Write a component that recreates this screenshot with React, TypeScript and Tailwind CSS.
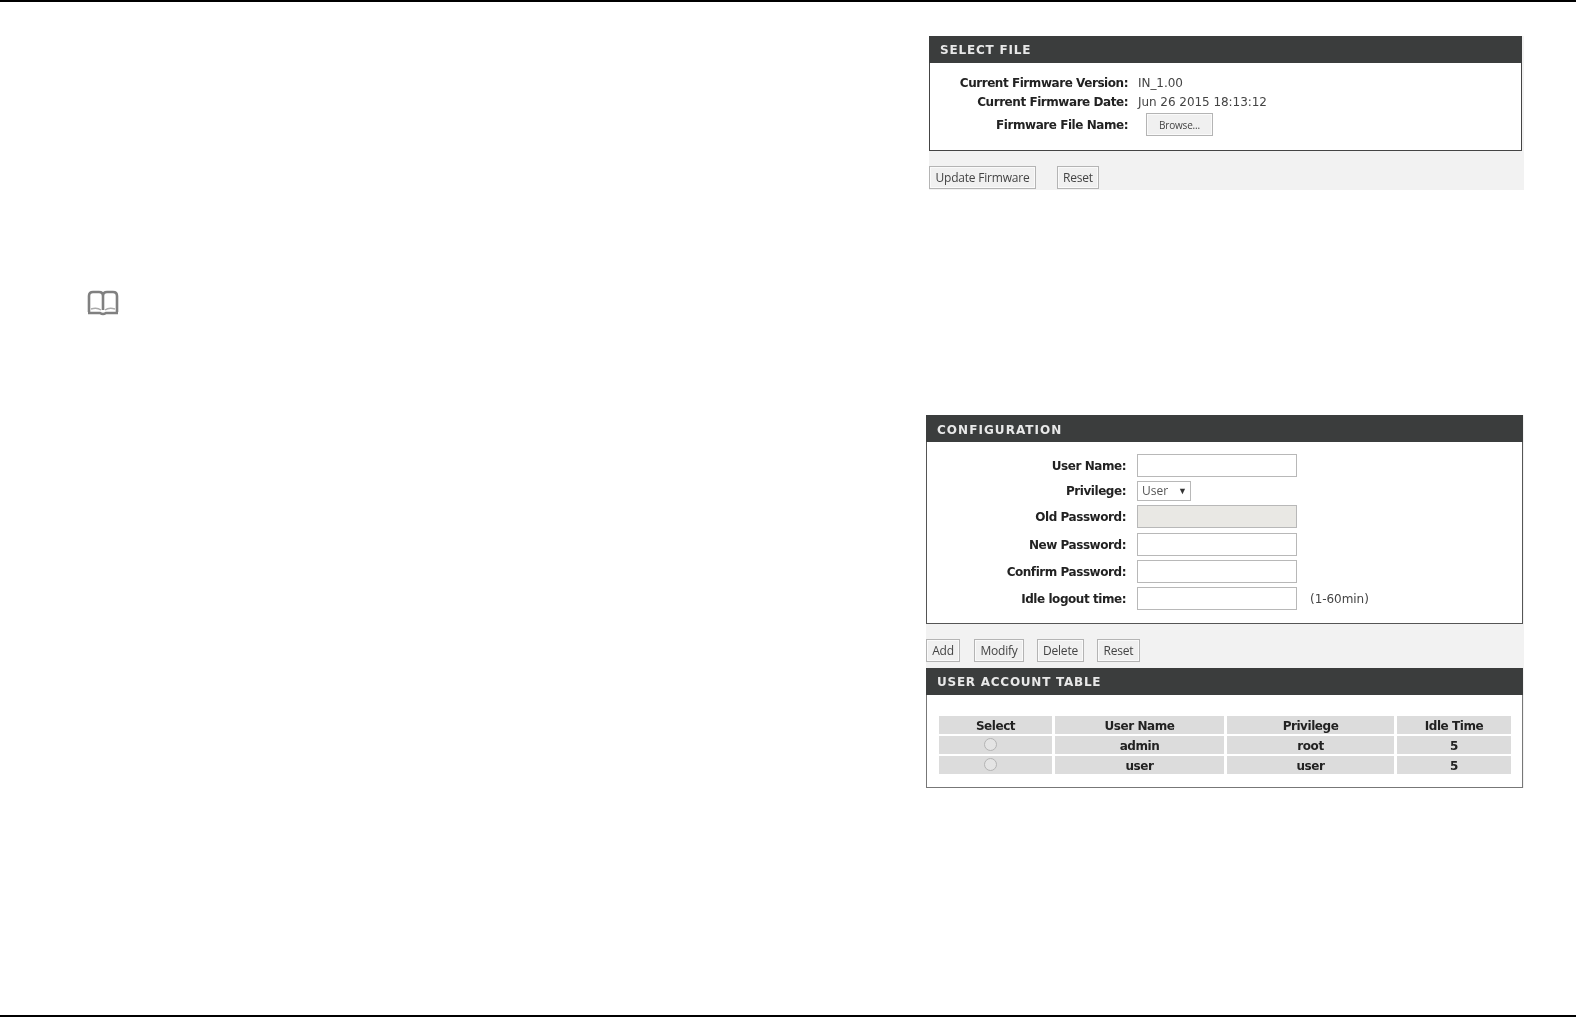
const label = "text-right text-[12px] font-bold text-[#222] tracking-[-0.45px] font-['DejaVu_Sans',sans-serif] leading-none pt-[2px]";
const labelUp = "text-right text-[12px] font-bold text-[#222] tracking-[-0.45px] font-['DejaVu_Sans',sans-serif] leading-none";
const plain = "text-[12px] text-[#444] font-['DejaVu_Sans',sans-serif] tracking-[-0.05px] leading-none pt-[2px]";

function Btn({ label: text, w, small }: { label: string; w: string; small?: boolean }) {
  return (
    <div className={`${w} h-[23px] flex items-center justify-center border border-[#b4b4b4] bg-[#f0f0f0] ${small ? "text-[10px] pt-[2px]" : "text-[12px]"} text-[#444] font-['Open_Sans',sans-serif] tracking-[-0.2px] shadow-[inset_0_0_0_1px_#fafafa]`}>
      {text}
    </div>
  );
}

function Header({ title, track, pad }: { title: string; track: string; pad: string }) {
  return (
    <div className={`h-[27px] bg-[#3b3d3d] flex items-center pl-[11px] ${pad} text-[12px] font-bold ${track} text-[#e8e8e8] font-['DejaVu_Sans',sans-serif]`}>
      {title}
    </div>
  );
}

function FwRow({ name, value }: { name: string; value: string }) {
  return (
    <div className="flex items-center h-[19px]">
      <div className={`w-[198px] ${label}`}>{name}</div>
      <div className={`ml-[10px] ${plain}`}>{value}</div>
    </div>
  );
}

function Field({ name, disabled, note, h }: { name: string; disabled?: boolean; note?: string; h: string }) {
  return (
    <div className={`flex items-center ${h}`}>
      <div className={`w-[199px] ${labelUp}`}>{name}</div>
      <div className={`ml-[11px] w-[160px] h-[23px] border border-[#b8b8b8] ${disabled ? "bg-[#e9e8e4]" : "bg-white"}`} />
      {note && <div className={`ml-[13px] text-[12px] text-[#444] font-['DejaVu_Sans',sans-serif] tracking-[-0.05px] leading-none`}>{note}</div>}
    </div>
  );
}

function Radio() {
  return <div className="w-[13px] h-[13px] -ml-[10px] -mt-[3px] rounded-full border border-[#b4b4b4] bg-[#e4e4e4]" />;
}

const cell = "h-[18px] bg-[#dcdcdc] flex items-center justify-center text-[12px] font-bold text-[#222] tracking-[-0.45px] font-['DejaVu_Sans',sans-serif] leading-none pt-[2px]";

export default function App() {
  return (
    <div className="h-[1017px] bg-white flex flex-col">
      <div className="h-[2px] bg-black" />
      <div className="flex-1 flex blur-[0.4px]">
        <div className="w-[926px] pl-[87px] pt-[288px]">
          <svg width="32" height="26" viewBox="0 0 32 26" fill="none" stroke="#808080" strokeWidth="2.6">
            <path d="M2 22 V6 Q2 2 6 2 H12 Q16 2 16 6 Q16 2 20 2 H26 Q30 2 30 6 V22" />
            <path d="M16 6 V20" />
            <path d="M1 23 H13 Q16 25 19 23 H31" />
            <path d="M4 19 Q10 17 14 20 M18 20 Q22 17 28 19" strokeWidth="1.4" stroke="#aaaaaa" />
          </svg>
        </div>
        <div className="w-[598px] pt-[34px]">
          <section className="ml-[3px] w-[595px] h-[154px] bg-[#f2f2f2]">
            <div className="w-[593px] border border-[#444] border-t-0 bg-white h-[115px]">
              <div className="-mx-px">
                <Header title="SELECT FILE" track="tracking-[0.8px]" pad="pt-[1px]" />
              </div>
              <div className="pt-[9px]">
                <FwRow name="Current Firmware Version:" value="IN_1.00" />
                <FwRow name="Current Firmware Date:" value="Jun 26 2015 18:13:12" />
                <div className="flex items-center h-[24px] mt-[2px]">
                  <div className={`w-[198px] ${label}`}>Firmware File Name:</div>
                  <div className="ml-[18px]"><Btn label="Browse..." w="w-[67px]" small /></div>
                </div>
              </div>
            </div>
            <div className="flex gap-[21px] pt-[15px]">
              <Btn label="Update Firmware" w="w-[107px]" />
              <Btn label="Reset" w="w-[42px]" />
            </div>
          </section>

          <section className="mt-[225px] w-[598px] bg-[#f2f2f2]">
            <div className="w-[597px] bg-white border border-[#555] border-t-0 h-[209px]">
              <div className="-mx-px"><Header title="CONFIGURATION" track="tracking-[1.05px]" pad="pt-[2px]" /></div>
              <div className="pt-[11px]">
                <Field name="User Name:" h="h-[25px]" />
                <div className="flex items-center h-[26px]">
                  <div className={`w-[199px] ${labelUp}`}>Privilege:</div>
                  <div className="ml-[11px] w-[54px] h-[20px] border border-[#b8b8b8] bg-white flex items-center pl-[4px] text-[12px] text-[#555] font-['Open_Sans',sans-serif]">
                    User<span className="ml-[10px] text-[9px] text-[#333]">▼</span>
                  </div>
                </div>
                <Field name="Old Password:" disabled h="h-[25px]" />
                <Field name="New Password:" h="h-[27px] mt-[2px]" />
                <Field name="Confirm Password:" h="h-[27px]" />
                <Field name="Idle logout time:" note="(1-60min)" h="h-[27px]" />
              </div>
            </div>
            <div className="flex pt-[15px] h-[44px] items-start">
              <Btn label="Add" w="w-[34px]" />
              <div className="ml-[14px]"><Btn label="Modify" w="w-[50px]" /></div>
              <div className="ml-[13px]"><Btn label="Delete" w="w-[47px]" /></div>
              <div className="ml-[13px]"><Btn label="Reset" w="w-[43px]" /></div>
            </div>
            <div className="w-[597px] bg-white border border-[#777] border-t-0 h-[120px]">
              <div className="-mx-px"><Header title="USER ACCOUNT TABLE" track="tracking-[0.75px]" pad="pt-[0px]" /></div>
              <div className="pt-[21px] pl-[12px]">
                <div className="grid grid-cols-[113px_169px_167px_114px] gap-x-[3px] gap-y-[2px]">
                  {["Select", "User Name", "Privilege", "Idle Time"].map((t) => (
                    <div key={t} className={cell}>{t}</div>
                  ))}
                  <div className={cell}><Radio /></div>
                  <div className={cell}>admin</div>
                  <div className={cell}>root</div>
                  <div className={cell}>5</div>
                  <div className={cell}><Radio /></div>
                  <div className={cell}>user</div>
                  <div className={cell}>user</div>
                  <div className={cell}>5</div>
                </div>
              </div>
            </div>
          </section>
        </div>
      </div>
      <div className="h-[2px] bg-black" />
    </div>
  );
}
